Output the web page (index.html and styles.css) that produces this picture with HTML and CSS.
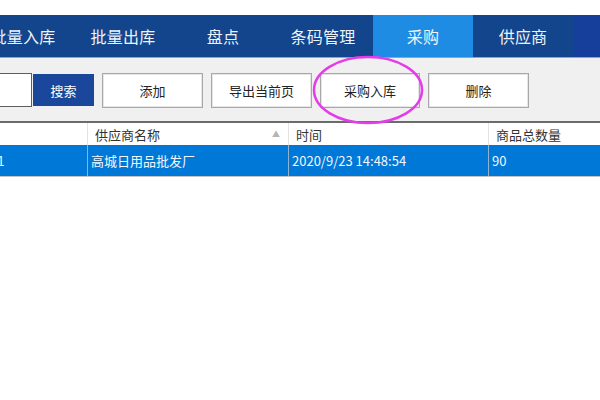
FILE: index.html
```html
<!DOCTYPE html>
<html lang="zh-CN">
<head>
<meta charset="utf-8">
<title>采购</title>
<link rel="stylesheet" href="styles.css">
</head>
<body>
<div class="page">
  <nav class="nav">
    <div class="tab">批量入库</div>
    <div class="tab">批量出库</div>
    <div class="tab">盘点</div>
    <div class="tab">条码管理</div>
    <div class="tab active">采购</div>
    <div class="tab">供应商</div>
    <div class="tab last"></div>
  </nav>
  <div class="toolbar">
    <input class="search-input" type="text">
    <button class="btn-search">搜索</button>
    <button class="btn">添加</button>
    <button class="btn">导出当前页</button>
    <div class="mark">
      <button class="btn">采购入库</button>
      <svg class="ellipse" width="112" height="70" viewBox="0 0 112 70">
        <ellipse cx="56" cy="35" rx="54" ry="33" fill="none" stroke="#e33ce8" stroke-width="2.5"/>
      </svg>
    </div>
    <button class="btn">删除</button>
  </div>
  <div class="table">
    <div class="row head">
      <div class="cell c1"></div>
      <div class="cell c2">供应商名称<span class="sort">▲</span></div>
      <div class="cell c3">时间</div>
      <div class="cell c4">商品总数量</div>
    </div>
    <div class="row sel">
      <div class="cell c1"><span class="clip">CG202009230001</span></div>
      <div class="cell c2">高城日用品批发厂</div>
      <div class="cell c3">2020/9/23 14:48:54</div>
      <div class="cell c4">90</div>
    </div>
  </div>
</div>
</body>
</html>
```

FILE: styles.css
```css
* { box-sizing: border-box; }
html, body { margin: 0; padding: 0; background: #ffffff; }
body {
  font-family: "Noto Sans CJK SC", "Noto Sans", sans-serif;
  width: 600px;
  height: 400px;
  overflow: hidden;
}
.page { padding-top: 15px; }

.nav {
  display: flex;
  background: #12458b;
  margin-left: -27px;
  border-bottom: 1px solid #9aa3ad;
  height: 43px;
}
.tab {
  flex: 0 0 100px;
  display: flex;
  align-items: center;
  justify-content: center;
  color: #eef3fb;
  font-size: 16px;
  letter-spacing: 0.2px;
  padding-bottom: 1px;
}
.tab.active { background: #1f8ce4; }
.tab.last { flex: 1 1 auto; background: #163f9b; margin-left: 1px; }

.toolbar {
  display: flex;
  align-items: center;
  gap: 8px;
  height: 65px;
  background: #f0f0f0;
  border-bottom: 2px solid #6b6b6b;
  padding-top: 1px;
}
.search-input {
  width: 40px;
  height: 34px;
  margin-left: -8px;
  border: 1px solid #5d5d5d;
  background: #fff;
  margin-right: -7px;
}
.btn-search {
  width: 61px;
  height: 32px;
  background: #1a479b;
  color: #fff;
  border: none;
  font-family: inherit;
  font-size: 13px;
}
.btn {
  width: 101px;
  height: 35px;
  background: #fff;
  border: 1px solid #a8a8a8;
  box-shadow: inset 0 0 0 1px #e6e6e6;
  color: #222;
  font-family: inherit;
  font-size: 13px;
  padding: 0;
}
.mark { position: relative; display: flex; }
.mark .btn { width: 100px; }
.ellipse {
  position: absolute;
  left: -8px;
  top: -18px;
  pointer-events: none;
}

.table { font-size: 13px; }
.row { display: flex; }
.row.head {
  height: 22px;
  background: #fff;
  color: #333;
}
.row.sel {
  height: 32px;
  background: #0078d7;
  color: #f2f7fd;
  border-bottom: 1px solid #c4c4c4;
}
.cell {
  display: flex;
  align-items: center;
  overflow: hidden;
  white-space: nowrap;
  border-right: 1px solid #e3e3e3;
}
.row.sel .cell { border-right-color: #8fb3d3; }
.head .cell { padding-left: 7px; }
.sel .cell { padding-left: 3px; }
.c1 { width: 88px; }
.c2 { width: 201px; position: relative; }
.c3 { width: 200px; }
.c4 { flex: 1 1 auto; border-right: none; }
.head .c1 { padding-left: 0; }
.sel .c1 { padding-left: 0; }
.clip { margin-left: -99px; }
.sort {
  position: absolute;
  right: 8px;
  top: 5px;
  font-size: 8px;
  color: #b5b5b5;
}
```
